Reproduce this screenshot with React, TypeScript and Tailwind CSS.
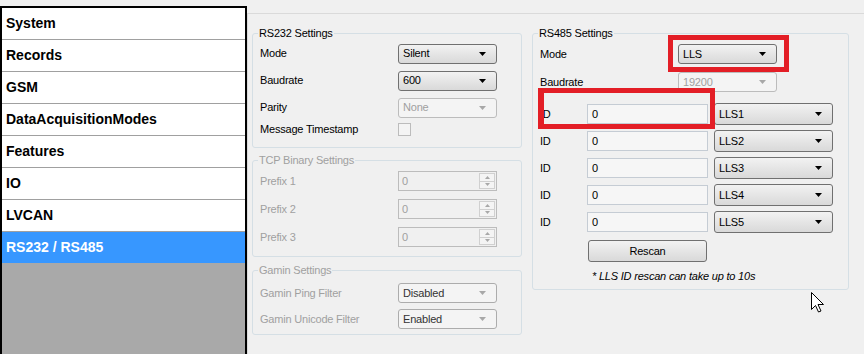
import React from 'react';

const menu = ['System', 'Records', 'GSM', 'DataAcquisitionModes', 'Features', 'IO', 'LVCAN'];

function Arrow({ disabled }: { disabled?: boolean }) {
  return (
    <svg width="7" height="4" viewBox="0 0 7 4" className="shrink-0">
      <path d="M0 0H7L3.5 4Z" fill={disabled ? '#a8a8a8' : '#000'} />
    </svg>
  );
}

function Combo({ value, disabled, w = 'w-[99px]', h = 'h-[20px]' }: any) {
  if (disabled) {
    return (
      <div className={`${w} ${h} flex items-center justify-between pl-[4px] pr-[10px] border border-[#bcbcbc] rounded-[3px] bg-[#f4f4f4] text-[#a0a0a0]`}>
        <span>{value}</span>
        <Arrow disabled />
      </div>
    );
  }
  return (
    <div className={`${w} ${h} flex items-center justify-between pl-[4px] pr-[10px] border border-[#707070] rounded-[3px] bg-gradient-to-b from-[#f2f2f2] to-[#d9d9d9] text-black`}>
      <span>{value}</span>
      <Arrow />
    </div>
  );
}

function Spin() {
  return (
    <div className="w-[99px] h-[20px] flex items-center justify-between border border-[#bcbcbc] bg-[#f0f0f0] pl-[3px] pr-[1px] text-[#a0a0a0]">
      <span>0</span>
      <div className="w-[16px] h-[16px] flex flex-col border border-[#d0d0d0] bg-[#f4f4f4]">
        <div className="flex-1 flex items-center justify-center border-b border-[#d0d0d0]">
          <svg width="5" height="3" viewBox="0 0 5 3"><path d="M0 3H5L2.5 0Z" fill="#a8a8a8" /></svg>
        </div>
        <div className="flex-1 flex items-center justify-center">
          <svg width="5" height="3" viewBox="0 0 5 3"><path d="M0 0H5L2.5 3Z" fill="#a8a8a8" /></svg>
        </div>
      </div>
    </div>
  );
}

function Group({ title, disabled, children, className = '' }: any) {
  return (
    <fieldset className={`border border-[#d5dfe5] rounded-[3px] ${className}`}>
      <legend className={`ml-[5px] px-[1px] leading-[14px] ${disabled ? 'text-[#a0a0a0]' : 'text-black'}`}>{title}</legend>
      {children}
    </fieldset>
  );
}

function Row({ label, disabled, children, h = 'h-[27px]' }: any) {
  return (
    <div className={`flex items-center pl-[7px] ${h}`}>
      <span className={`w-[138px] ${disabled ? 'text-[#a0a0a0]' : 'text-black'}`}>{label}</span>
      {children}
    </div>
  );
}

export default function App() {
  return (
    <div className="relative w-[864px] h-[354px] overflow-hidden bg-[#f0f0f0] flex font-['Liberation_Sans',Arial,sans-serif] text-[11px] tracking-[-0.2px]">
      {/* menu */}
      <div className="w-[247px] h-full pt-[6px] shrink-0">
        <div className="h-full border-l-2 border-r-2 border-t-2 border-black bg-[#a9a9a9] flex flex-col">
          {menu.map(m => (
            <div key={m} className="h-[32px] shrink-0 bg-white border-b border-[#a0a0a0] pl-[4px] flex items-center font-bold text-[14px] tracking-normal text-black">
              {m}
            </div>
          ))}
          <div className="h-[31px] shrink-0 bg-[#3797ff] pl-[4px] flex items-center font-bold text-[14px] tracking-normal text-white">
            RS232 / RS485
          </div>
        </div>
      </div>

      {/* settings */}
      <div className="flex-1 pt-[13px]">
        <div className="h-full border-l border-t border-[#dadada] flex">
          <div className="ml-[4px] mt-[12px] w-[270px] flex flex-col">
            <Group title="RS232 Settings" className="pb-[10px]">
              <Row label="Mode"><Combo value="Silent" /></Row>
              <Row label="Baudrate"><Combo value="600" /></Row>
              <Row label="Parity"><Combo value="None" disabled /></Row>
              <Row label="Message Timestamp" h="h-[16px]">
                <div className="w-[13px] h-[13px] border border-[#bcbcbc] bg-[#f4f4f4]" />
              </Row>
            </Group>

            <Group title="TCP Binary Settings" disabled className="mt-[5px] pb-[5px]">
              <Row label="Prefix 1" disabled h="h-[28px]"><Spin /></Row>
              <Row label="Prefix 2" disabled h="h-[28px]"><Spin /></Row>
              <Row label="Prefix 3" disabled h="h-[28px]"><Spin /></Row>
            </Group>

            <Group title="Gamin Settings" disabled className="mt-[6px] pt-[3px] pb-[2px]">
              <Row label="Gamin Ping Filter" disabled h="h-[26px]">
                <div className="w-[99px] h-[20px] flex items-center justify-between pl-[4px] pr-[10px] border border-[#acacac] rounded-[3px] bg-[#f4f4f4] text-[#333]">
                  <span>Disabled</span>
                  <Arrow disabled />
                </div>
              </Row>
              <Row label="Gamin Unicode Filter" disabled h="h-[26px]">
                <div className="w-[99px] h-[20px] flex items-center justify-between pl-[4px] pr-[10px] border border-[#acacac] rounded-[3px] bg-[#f4f4f4] text-[#333]">
                  <span>Enabled</span>
                  <Arrow disabled />
                </div>
              </Row>
            </Group>
          </div>

          <div className="ml-[10px] mt-[12px] w-[317px]">
            <Group title="RS485 Settings" className="pb-[6px]">
              <Row label="Mode" h="h-[28px]"><Combo value="LLS" /></Row>
              <Row label="Baudrate" h="h-[28px]"><Combo value="19200" disabled /></Row>
              <div className="mt-[6px] flex flex-col">
                {[1, 2, 3, 4, 5].map(n => (
                  <div key={n} className="h-[27px] flex items-start pt-[2px] pl-[7px]">
                    <span className="w-[47px] h-[21px] leading-[21px]">ID</span>
                    <div className="w-[121px] h-[20px] border border-[#c5ccd4] bg-[#f6f6f6] pl-[4px] leading-[18px]">0</div>
                    <div className="ml-[6px] -mt-[1px]">
                      <Combo value={`LLS${n}`} w="w-[119px]" h="h-[22px]" />
                    </div>
                  </div>
                ))}
              </div>
              <div className="mt-[3px] ml-[55px] w-[119px] h-[22px] flex items-center justify-center border border-[#707070] rounded-[3px] bg-gradient-to-b from-[#f2f2f2] to-[#d9d9d9]">
                Rescan
              </div>
              <div className="mt-[7px] ml-[59px] italic leading-[14px]">* LLS ID rescan can take up to 10s</div>
            </Group>
          </div>
        </div>
      </div>

      {/* highlight boxes */}
      <div className="absolute left-[668px] top-[35px] w-[121px] h-[37px] border-[5px] border-[#e31e26]" />
      <div className="absolute left-[538px] top-[88px] w-[177px] h-[41px] border-[5px] border-l-[6px] border-[#e31e26]" />

      {/* mouse pointer */}
      <svg className="absolute left-[811px] top-[292px]" width="13" height="21" viewBox="0 0 13 21">
        <path d="M0.5 0.5V17.5L4.5 13.5L7.5 20L10 19L7 12.5H12.5Z" fill="#fff" stroke="#000" strokeWidth="1" strokeLinejoin="miter" />
      </svg>
    </div>
  );
}
